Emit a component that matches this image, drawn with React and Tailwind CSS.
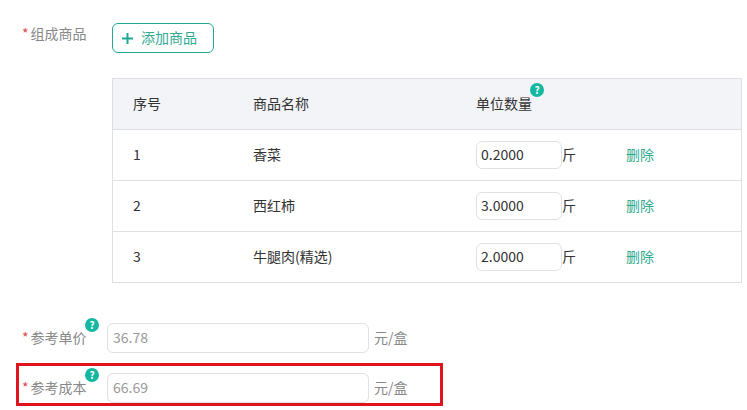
const FONT = "font-['Noto_Sans_CJK_SC','Noto_Sans',sans-serif]";

function Help({ className }) {
  return (
    <span className={`absolute flex h-[14px] w-[14px] items-center justify-center rounded-full bg-[#14b8a0] text-[10px] font-bold leading-none text-white ${className}`}>?</span>
  );
}

function Row({ no, name, qty, last }) {
  return (
    <div className={`flex items-center text-[14px] text-[#333] ${last ? "h-[50px]" : "h-[51px] border-b border-[#dcdfe3]"}`}>
      <div className="w-[120px] pb-[2px] pl-[20px]">{no}</div>
      <div className="w-[223px] pb-[2px] pl-[20px]">{name}</div>
      <div className="flex items-center pl-[20px]">
        <div className="flex h-[28px] w-[86px] items-center rounded-[6px] border border-[#dfe1e5] bg-white pb-[2px] pl-[4px] text-[14px] text-[#333]">{qty}</div>
        <span className="pb-[2px]">斤</span>
        <span className="ml-[50px] pb-[2px] text-[#2fa98f]">删除</span>
      </div>
    </div>
  );
}

function PriceRow({ label, value }) {
  return (
    <div className="flex items-center">
      <div className="relative flex w-[85px] items-center pb-[2px] text-[14px] text-[#888]">
        <span className="mr-[2px] text-[#e0474c]">*</span>
        <span>{label}</span>
        <Help className="left-[63px] top-[-9px]" />
      </div>
      <div className="flex h-[30px] w-[262px] items-center rounded-[6px] border border-[#dfe1e5] bg-white pb-[2px] pl-[5px] text-[14px] text-[#999]">{value}</div>
      <span className="ml-[5px] pb-[2px] text-[14px] text-[#888]">元/盒</span>
    </div>
  );
}

export default function App() {
  return (
    <div className={`h-[410px] w-[747px] overflow-hidden bg-white ${FONT}`}>
      <div className="flex items-start pl-[22px] pt-[23px]">
        <div className="flex w-[90px] items-center text-[14px] text-[#888]">
          <span className="mr-[2px] text-[#e0474c]">*</span>
          <span>组成商品</span>
        </div>
        <div className="flex h-[30px] w-[102px] items-center rounded-[6px] border border-[#1fa892] pb-[2px] pl-[8px] text-[14px] text-[#2fa98f]">
          <svg width="13" height="13" viewBox="0 0 13 13" className="mr-[7px] mt-[2px]">
            <path d="M6.5 1v11M1 6.5h11" stroke="#1fa892" strokeWidth="2" />
          </svg>
          添加商品
        </div>
      </div>

      <div className="ml-[112px] mt-[25px] w-[630px] border border-[#dcdfe3]">
        <div className="flex h-[51px] items-center border-b border-[#dcdfe3] bg-[#f3f4f8] pb-[2px] text-[14px] text-[#333]">
          <div className="w-[120px] pl-[20px]">序号</div>
          <div className="w-[223px] pl-[20px]">商品名称</div>
          <div className="relative pl-[20px]">
            单位数量
            <Help className="left-[74px] top-[-10px]" />
          </div>
        </div>
        <Row no="1" name="香菜" qty="0.2000" />
        <Row no="2" name="西红柿" qty="3.0000" />
        <Row no="3" name="牛腿肉(精选)" qty="2.0000" last />
      </div>

      <div className="ml-[22px] mt-[40px]">
        <PriceRow label="参考单价" value="36.78" />
      </div>

      <div className="ml-[16px] mt-[10px] flex h-[43px] w-[427px] items-end border-[3px] border-[#e0141f] pl-[3px]">
        <PriceRow label="参考成本" value="66.69" />
      </div>
    </div>
  );
}
